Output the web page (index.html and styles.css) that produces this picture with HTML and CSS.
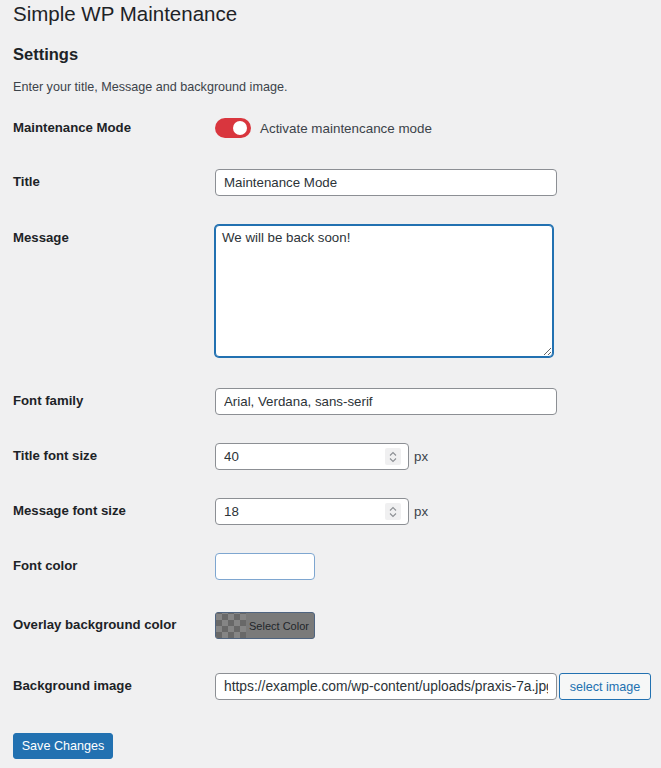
FILE: index.html
```html
<!DOCTYPE html>
<html>
<head>
<meta charset="utf-8">
<link rel="stylesheet" href="styles.css">
</head>
<body>
<div class="wrap">
  <h1 class="title">Simple WP Maintenance</h1>
  <h2 class="subtitle">Settings</h2>
  <p class="desc">Enter your title, Message and background image.</p>

  <div class="row row-mode">
    <div class="lbl lbl-mode">Maintenance Mode</div>
    <div class="field toggle-field">
      <span class="toggle"><span class="knob"></span></span>
      <span class="toggle-text">Activate maintencance mode</span>
    </div>
  </div>

  <div class="row">
    <div class="lbl">Title</div>
    <div class="field"><input class="inp inp-wide" type="text" value="Maintenance Mode"></div>
  </div>

  <div class="row row-msg">
    <div class="lbl">Message</div>
    <div class="field"><textarea class="ta">We will be back soon!</textarea></div>
  </div>

  <div class="row">
    <div class="lbl">Font family</div>
    <div class="field"><input class="inp inp-wide" type="text" value="Arial, Verdana, sans-serif"></div>
  </div>

  <div class="row">
    <div class="lbl">Title font size</div>
    <div class="field num-field">
      <span class="num-wrap"><input class="inp inp-num" type="text" value="40"><span class="spin"><svg width="10" height="14" viewBox="0 0 10 14"><path d="M2 5.5 L5 2.5 L8 5.5 M2 8.5 L5 11.5 L8 8.5" fill="none" stroke="#8c8f94" stroke-width="1.1"/></svg></span></span>
      <span class="unit">px</span>
    </div>
  </div>

  <div class="row">
    <div class="lbl">Message font size</div>
    <div class="field num-field">
      <span class="num-wrap"><input class="inp inp-num" type="text" value="18"><span class="spin"><svg width="10" height="14" viewBox="0 0 10 14"><path d="M2 5.5 L5 2.5 L8 5.5 M2 8.5 L5 11.5 L8 8.5" fill="none" stroke="#8c8f94" stroke-width="1.1"/></svg></span></span>
      <span class="unit">px</span>
    </div>
  </div>

  <div class="row">
    <div class="lbl">Font color</div>
    <div class="field"><input class="inp inp-color" type="text" value=""></div>
  </div>

  <div class="row row-overlay">
    <div class="lbl">Overlay background color</div>
    <div class="field">
      <button class="color-btn" type="button"><span class="checker"></span><span class="color-text">Select Color</span></button>
    </div>
  </div>

  <div class="row">
    <div class="lbl">Background image</div>
    <div class="field img-field">
      <input class="inp inp-wide inp-url" type="text" value="https://example.com/wp-content/uploads/praxis-7a.jpg">
      <button class="sec-btn" type="button">select image</button>
    </div>
  </div>

  <div class="submit">
    <button class="primary" type="button">Save Changes</button>
  </div>
</div>
</body>
</html>
```

FILE: styles.css
```css
html, body {
  margin: 0;
  padding: 0;
  background: #f0f0f1;
}
body {
  font-family: "Liberation Sans", Arial, sans-serif;
  color: #1d2327;
}
.wrap {
  padding: 0 13px;
}
.title {
  margin: 0;
  font-size: 20.5px;
  font-weight: 400;
  line-height: 28px;
  color: #1d2327;
}
.subtitle {
  margin: 14px 0 0;
  font-size: 16.5px;
  font-weight: 700;
  line-height: 24px;
}
.desc {
  margin: 11px 0 0;
  font-size: 12.6px;
  line-height: 20px;
  color: #3c434a;
}
.row {
  display: flex;
  align-items: flex-start;
  padding: 14px 0;
}
.lbl {
  width: 202px;
  flex: none;
  padding-top: 4px;
  font-size: 13.2px;
  font-weight: 700;
  line-height: 18px;
  color: #1d2327;
}
.row-mode {
  padding: 21px 0 17px;
}
.row-mode .lbl {
  padding-top: 1px;
}
.toggle-field {
  display: flex;
  align-items: center;
  height: 20px;
}
.toggle {
  position: relative;
  width: 36px;
  height: 20px;
  border-radius: 10px;
  background: #d9363e;
  display: inline-block;
}
.knob {
  position: absolute;
  right: 4px;
  top: 3px;
  width: 14px;
  height: 14px;
  border-radius: 50%;
  background: #fff;
}
.toggle-text {
  margin-left: 9px;
  font-size: 13.4px;
  color: #3c434a;
}
.inp {
  box-sizing: border-box;
  height: 27px;
  border: 1px solid #8c8f94;
  border-radius: 4px;
  background: #fff;
  padding: 0 8px;
  font-family: "Liberation Sans", Arial, sans-serif;
  font-size: 13.3px;
  color: #2c3338;
  margin: 0;
  outline: none;
}
.inp-wide {
  width: 342px;
}
.inp-url {
  font-size: 13.8px;
}
.row-msg {
  padding: 15px 0 17px;
}
.ta {
  box-sizing: border-box;
  display: block;
  width: 338px;
  height: 132px;
  margin: 0;
  border: 1px solid #2271b1;
  box-shadow: 0 0 0 1px #2271b1;
  border-radius: 4px;
  padding: 2px 6px;
  font-family: "Liberation Sans", Arial, sans-serif;
  font-size: 13.3px;
  line-height: 20px;
  color: #2c3338;
  outline: none;
  resize: vertical;
}
.num-field {
  display: flex;
  align-items: center;
}
.num-wrap {
  position: relative;
  display: inline-block;
}
.inp-num {
  width: 194px;
}
.spin {
  position: absolute;
  right: 8px;
  top: 5px;
  width: 16px;
  height: 17px;
  background: #f0f0f1;
  border-radius: 2px;
  display: flex;
  align-items: center;
  justify-content: center;
}
.unit {
  margin-left: 5px;
  font-size: 13.3px;
  color: #3c434a;
}
.inp-color {
  width: 100px;
  border-color: #7ea6d0;
}
.row-overlay {
  padding: 18px 0 20px;
}
.color-btn {
  box-sizing: border-box;
  display: flex;
  align-items: stretch;
  width: 100px;
  height: 27px;
  padding: 0;
  margin: 0;
  border: 1px solid #4f6480;
  border-radius: 3px;
  background: #7a7a7a;
  overflow: hidden;
  cursor: pointer;
}
.checker {
  width: 30px;
  flex: none;
  background-color: #858585;
  background-image: conic-gradient(#686868 25%, transparent 0 50%, #686868 0 75%, transparent 0);
  background-size: 12px 12px;
  background-position: 0 1px;
}
.color-text {
  flex: 1;
  display: flex;
  align-items: center;
  justify-content: center;
  font-family: "Liberation Sans", Arial, sans-serif;
  font-size: 11px;
  color: #22262a;
  padding-right: 2px;
}
.img-field {
  display: flex;
  align-items: center;
  gap: 2px;
}
.sec-btn {
  box-sizing: border-box;
  height: 27px;
  width: 92px;
  margin: 0;
  padding: 0 6px;
  border: 1px solid #2271b1;
  border-radius: 3px;
  background: #f6f7f7;
  color: #2271b1;
  font-family: "Liberation Sans", Arial, sans-serif;
  font-size: 12.6px;
  white-space: nowrap;
  cursor: pointer;
}
.submit {
  padding-top: 19px;
}
.primary {
  box-sizing: border-box;
  height: 26px;
  width: 100px;
  margin: 0;
  padding: 0 4px;
  border: 1px solid #2271b1;
  border-radius: 3px;
  background: #2271b1;
  color: #fff;
  font-family: "Liberation Sans", Arial, sans-serif;
  font-size: 12.6px;
  white-space: nowrap;
  cursor: pointer;
}
```
